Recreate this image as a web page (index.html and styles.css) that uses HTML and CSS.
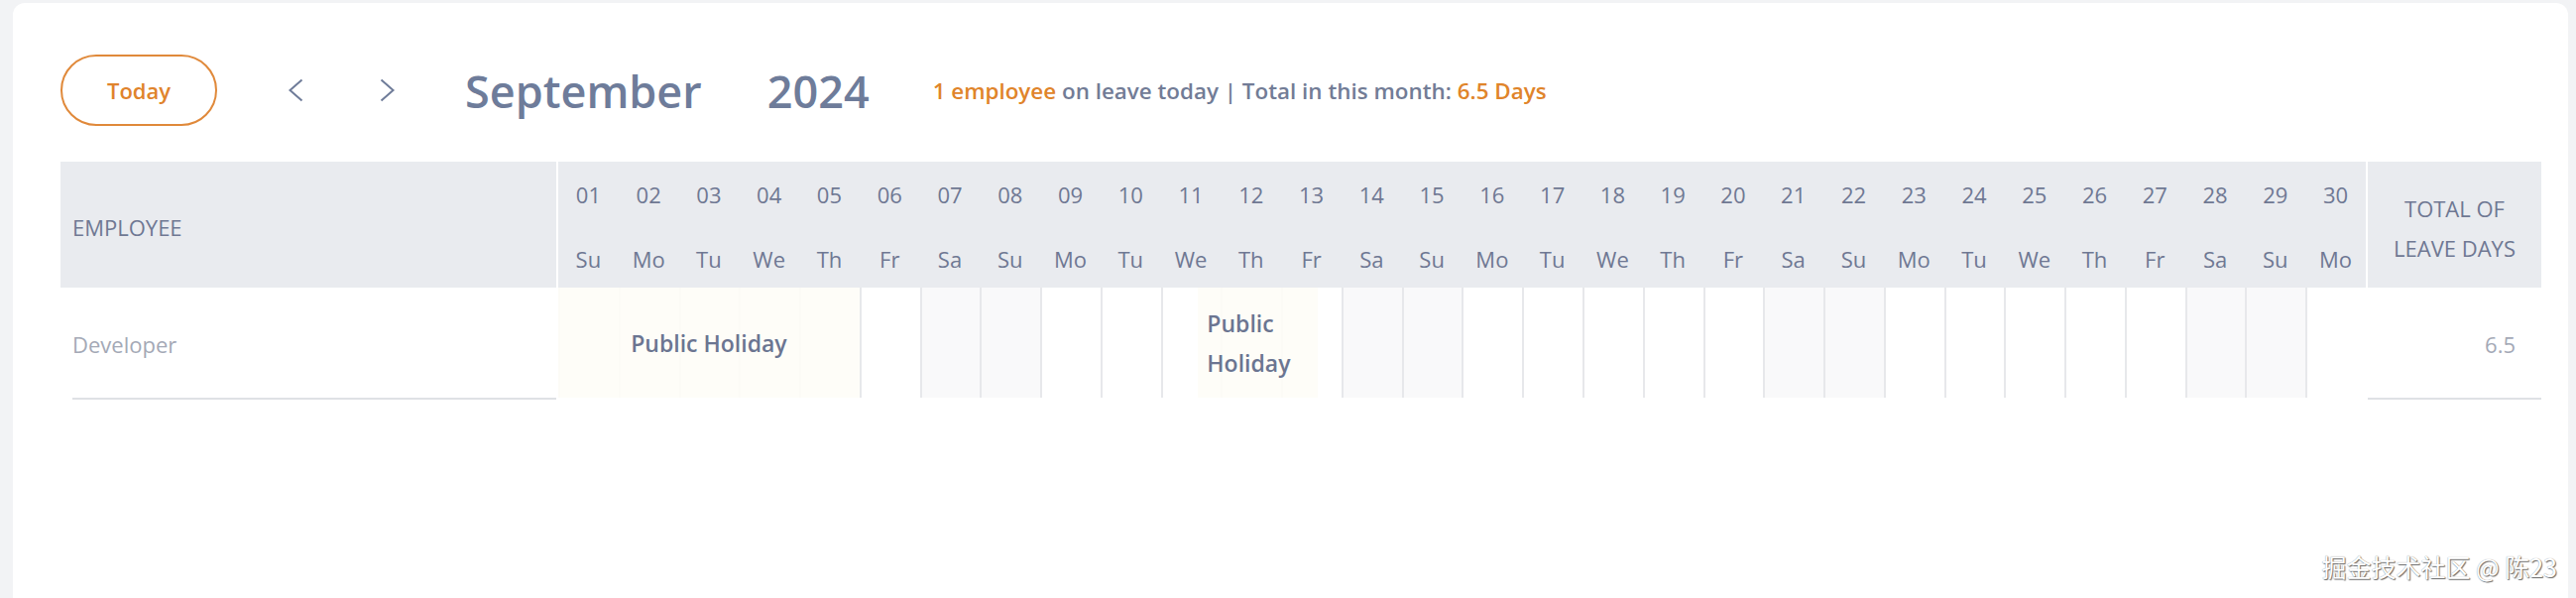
FILE: index.html
```html
<!DOCTYPE html>
<html lang="en">
<head>
<meta charset="utf-8">
<title>Leave Calendar</title>
<link rel="stylesheet" href="styles.css">
</head>
<body>
<div class="card">
  <div class="toolbar">
    <button class="btn-today">Today</button>
    <span class="nav nav-prev"><svg viewBox="0 0 16 24" width="16" height="24"><path d="M14.5 1.5 L2.5 12 L14.5 22.5" fill="none" stroke="#6f7c99" stroke-width="2"/></svg></span>
    <span class="nav nav-next"><svg viewBox="0 0 16 24" width="16" height="24"><path d="M1.5 1.5 L13.5 12 L1.5 22.5" fill="none" stroke="#6f7c99" stroke-width="2"/></svg></span>
    <span class="title">September</span>
    <span class="title year">2024</span>
    <span class="info"><span class="accent">1 employee</span> on leave today | Total in this month: <span class="accent">6.5 Days</span></span>
  </div>

  <div class="table">
    <div class="col-emp">
      <div class="emp-head">EMPLOYEE</div>
      <div class="emp-body">Developer</div>
    </div>

    <div class="col-days">
      <div class="days-head">
        <div class="dh">01<br>Su</div>
        <div class="dh">02<br>Mo</div>
        <div class="dh">03<br>Tu</div>
        <div class="dh">04<br>We</div>
        <div class="dh">05<br>Th</div>
        <div class="dh">06<br>Fr</div>
        <div class="dh">07<br>Sa</div>
        <div class="dh">08<br>Su</div>
        <div class="dh">09<br>Mo</div>
        <div class="dh">10<br>Tu</div>
        <div class="dh">11<br>We</div>
        <div class="dh">12<br>Th</div>
        <div class="dh">13<br>Fr</div>
        <div class="dh">14<br>Sa</div>
        <div class="dh">15<br>Su</div>
        <div class="dh">16<br>Mo</div>
        <div class="dh">17<br>Tu</div>
        <div class="dh">18<br>We</div>
        <div class="dh">19<br>Th</div>
        <div class="dh">20<br>Fr</div>
        <div class="dh">21<br>Sa</div>
        <div class="dh">22<br>Su</div>
        <div class="dh">23<br>Mo</div>
        <div class="dh">24<br>Tu</div>
        <div class="dh">25<br>We</div>
        <div class="dh">26<br>Th</div>
        <div class="dh">27<br>Fr</div>
        <div class="dh">28<br>Sa</div>
        <div class="dh">29<br>Su</div>
        <div class="dh">30<br>Mo</div>
      </div>
      <div class="days-body">
        <div class="db we"></div>
        <div class="db"></div>
        <div class="db"></div>
        <div class="db"></div>
        <div class="db"></div>
        <div class="db"></div>
        <div class="db we"></div>
        <div class="db we"></div>
        <div class="db"></div>
        <div class="db"></div>
        <div class="db"></div>
        <div class="db"></div>
        <div class="db"></div>
        <div class="db we"></div>
        <div class="db we"></div>
        <div class="db"></div>
        <div class="db"></div>
        <div class="db"></div>
        <div class="db"></div>
        <div class="db"></div>
        <div class="db we"></div>
        <div class="db we"></div>
        <div class="db"></div>
        <div class="db"></div>
        <div class="db"></div>
        <div class="db"></div>
        <div class="db"></div>
        <div class="db we"></div>
        <div class="db we"></div>
        <div class="db"></div>
        <div class="holiday" style="left:0%;width:16.667%"><span>Public Holiday</span></div>
        <div class="holiday" style="left:35.4%;width:6.64%"><span>Public Holiday</span></div>
      </div>
    </div>

    <div class="col-total">
      <div class="total-head">TOTAL OF<br>LEAVE DAYS</div>
      <div class="total-body">6.5</div>
    </div>
  </div>

  <div class="watermark">掘金技术社区 @ 陈23</div>
</div>
</body>
</html>
```

FILE: styles.css
```css
* {
  box-sizing: border-box;
}

body {
  margin: 0;
  background: #f2f3f5;
  font-family: "Open Sans", "Noto Sans", sans-serif;
}

.card {
  position: relative;
  margin: 3px 8px 0 13px;
  min-height: 600px;
  padding: 52px 0 0 48px;
  background: #ffffff;
  border-radius: 12px 12px 0 0;
}

/* toolbar */
.toolbar {
  display: flex;
  align-items: center;
  height: 72px;
}

.btn-today {
  width: 158px;
  height: 72px;
  padding: 0;
  border: 2px solid #e0893a;
  border-radius: 36px;
  background: #ffffff;
  color: #e0832c;
  font-family: "Open Sans", sans-serif;
  font-size: 22px;
  font-weight: 600;
}

.nav {
  display: flex;
  width: 16px;
  height: 24px;
  margin-left: 71px;
}

.nav-next {
  margin-left: 77px;
}

.title {
  margin-left: 70px;
  color: #6e7c9a;
  font-size: 45px;
  font-weight: 600;
  line-height: 1;
}

.year {
  margin-left: 66px;
}

.info {
  margin-left: 64px;
  color: #727c96;
  font-size: 22.4px;
  font-weight: 600;
}

.accent {
  color: #e0842a;
}

/* table */
.table {
  display: flex;
  width: 2502px;
  margin-top: 36px;
  font-size: 22px;
  color: #6f7893;
}

.col-emp {
  width: 500px;
}

.emp-head {
  display: flex;
  align-items: center;
  height: 127px;
  padding: 5px 0 0 12px;
  background: #e9ebef;
}

.emp-body {
  display: flex;
  align-items: center;
  height: 113px;
  margin-left: 12px;
  padding-top: 3px;
  border-bottom: 2px solid #dfe1e5;
  color: #a4a9b6;
}

.col-days {
  flex: 1;
  margin: 0 2px;
}

.days-head {
  display: flex;
  height: 127px;
  background: #e9ebef;
}

.dh {
  flex: 1;
  padding-top: 1px;
  text-align: center;
  line-height: 65px;
}

.days-body {
  position: relative;
  display: flex;
  height: 111px;
}

.db {
  flex: 1;
  border-left: 2px solid #e7e8eb;
}

.db.we {
  background: #f9f9fa;
}

.holiday {
  position: absolute;
  top: 0;
  bottom: 0;
  display: flex;
  align-items: center;
  justify-content: center;
  padding: 0 9px;
  background: rgba(254, 253, 247, 0.9);
  color: #6b7591;
  font-size: 23px;
  font-weight: 600;
  line-height: 40px;
}

.holiday span {
  text-align: left;
}

.col-total {
  width: 175px;
}

.total-head {
  display: flex;
  align-items: center;
  justify-content: center;
  height: 127px;
  padding-top: 7px;
  background: #e9ebef;
  text-align: center;
  line-height: 40px;
}

.total-body {
  height: 113px;
  padding: 2px 26px 0 0;
  border-bottom: 2px solid #dfe1e5;
  color: #a4a9b6;
  text-align: right;
  line-height: 111px;
}

.watermark {
  position: absolute;
  right: 11px;
  bottom: 14px;
  color: #ffffff;
  font-family: "Noto Sans CJK SC", sans-serif;
  font-size: 25px;
  text-shadow: 1px 1px 1px #6a6a6a, 0 0 1px #888888;
}
```
